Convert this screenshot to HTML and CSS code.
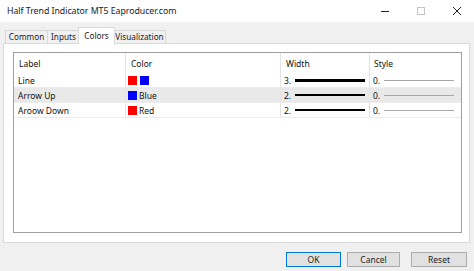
FILE: index.html
```html
<!DOCTYPE html>
<html>
<head>
<meta charset="utf-8">
<link rel="stylesheet" href="styles.css">
</head>
<body>
<div class="window">
  <div class="titlebar">
    <span class="title">Half Trend Indicator MT5 Eaproducer.com</span>
    <div class="controls">
      <svg class="ctl" width="10" height="10" viewBox="0 0 10 10"><path d="M1 5.5H9" stroke="#222" stroke-width="1"/></svg>
      <svg class="ctl" width="10" height="10" viewBox="0 0 10 10"><rect x="1.5" y="1.5" width="7" height="7" fill="none" stroke="#c4c4c4" stroke-width="1"/></svg>
      <svg class="ctl" width="10" height="10" viewBox="0 0 10 10"><path d="M1 1L9 9M9 1L1 9" stroke="#222" stroke-width="1"/></svg>
    </div>
  </div>
  <div class="body">
    <div class="tabs">
      <div class="tab t1">Common</div>
      <div class="tab t2">Inputs</div>
      <div class="tab active">Colors</div>
      <div class="tab t4">Visualization</div>
    </div>
    <div class="panel">
      <div class="list">
        <div class="row head">
          <div class="c1">Label</div>
          <div class="c2">Color</div>
          <div class="c3">Width</div>
          <div class="c4">Style</div>
        </div>
        <div class="row">
          <div class="c1">Line</div>
          <div class="c2"><span class="sw red"></span><span class="sw blue"></span></div>
          <div class="c3"><span class="num">3.</span><span class="wline w3"></span></div>
          <div class="c4"><span class="num">0.</span><span class="sline"></span></div>
        </div>
        <div class="row alt">
          <div class="c1">Arrow Up</div>
          <div class="c2"><span class="sw blue"></span><span class="cname">Blue</span></div>
          <div class="c3"><span class="num">2.</span><span class="wline w2"></span></div>
          <div class="c4"><span class="num">0.</span><span class="sline"></span></div>
        </div>
        <div class="row">
          <div class="c1">Aroow Down</div>
          <div class="c2"><span class="sw red"></span><span class="cname">Red</span></div>
          <div class="c3"><span class="num">2.</span><span class="wline w2"></span></div>
          <div class="c4"><span class="num">0.</span><span class="sline"></span></div>
        </div>
      </div>
    </div>
    <div class="footer">
      <div class="btn primary">OK</div>
      <div class="btn b2">Cancel</div>
      <div class="btn b3">Reset</div>
    </div>
  </div>
</div>
</body>
</html>
```
FILE: styles.css
```css
* { box-sizing: border-box; }
html, body { margin: 0; padding: 0; }
body {
  width: 474px;
  height: 271px;
  overflow: hidden;
  font-family: "Noto Sans", "Open Sans", sans-serif;
  font-size: 8.5px;
  color: #111;
  background: #f0f0f0;
}
.window { width: 474px; height: 271px; display: flex; flex-direction: column; }
.titlebar {
  height: 22px;
  background: #fff;
  display: flex;
  align-items: center;
  padding-left: 7px;
}
.title { font-size: 8.8px; color: #222; letter-spacing: -0.05px; }
.controls { margin-left: auto; display: flex; align-items: center; height: 22px; }
.ctl { display: block; }
.controls .ctl:nth-child(1) { margin-right: 26px; }
.controls .ctl:nth-child(2) { margin-right: 26px; }
.controls .ctl:nth-child(3) { margin-right: 12px; }

.body { flex: 1; display: flex; flex-direction: column; background: #f0f0f0; }
.tabs {
  display: flex;
  align-items: flex-end;
  height: 21px;
  padding-left: 5px;
}
.tab {
  height: 13px;
  line-height: 12px;
  text-align: center;
  white-space: nowrap;
  font-size: 8.2px;
  border: 1px solid #d9d9d9;
  border-bottom: none;
  margin-left: -1px;
  background: #f0f0f0;
  color: #222;
}
.tab.t1 { margin-left: 0; width: 43px; }
.tab.t2 { width: 33px; }
.tab.active {
  line-height: 15px;
  background: #fff;
  width: 37px;
  margin-left: -2px;
  margin-right: -1px;
  position: relative;
  z-index: 1;
  margin-bottom: -1px;
  height: 17px;
}
.tab.t4 { width: 53px; }
.panel {
  margin: 0 4px 0 3px;
  height: 200px;
  background: #fff;
  border: 1px solid #d9d9d9;
  padding: 8px 7px 9px 9px;
}
.list {
  height: 100%;
  border: 1px solid #9f9f9f;
  background: #fff;
}
.row {
  display: flex;
  height: 15px;
  align-items: center;
  border-bottom: 1px solid #ececec;
}
.row.head { height: 20px; border-bottom: none; }
.row.alt { background: #e9e9e9; }
.row > div {
  height: 100%;
  display: flex;
  align-items: center;
  border-right: 1px solid #e3e3e3;
}
.c1 { width: 112px; padding-left: 4px; }
.c2 { width: 155px; padding-left: 2px; }
.c3 { width: 89px; padding-left: 3px; }
.c4 { width: 91px; padding-left: 3px; border-right: none !important; }
.head .c1 { padding-left: 5px; }
.head .c2 { padding-left: 5px; }
.head .c3 { padding-left: 5px; }
.head .c4 { padding-left: 4px; }
.sw { display: inline-block; width: 9px; height: 9px; margin-right: 3px; }
.sw.red { background: #f00; }
.sw.blue { background: #00f; }
.cname { margin-left: -1px; }
.num { width: 11px; }
.wline { display: inline-block; width: 70px; background: #000; }
.wline.w3 { height: 3px; }
.wline.w2 { height: 2px; }
.sline { display: inline-block; width: 70px; height: 1px; background: #a8a8a8; }

.footer {
  display: flex;
  justify-content: flex-end;
  align-items: flex-start;
  padding-top: 9px;
  padding-right: 7px;
  gap: 6px;
}
.btn {
  height: 15px;
  line-height: 13px;
  width: 56px;
  text-align: center;
  background: #e1e1e1;
  border: 1px solid #adadad;
  color: #222;
}
.btn.primary { border-color: #0078d7; width: 55px; }
.btn.b2 { width: 53px; }
.btn.b3 { margin-left: 5px; }
```
